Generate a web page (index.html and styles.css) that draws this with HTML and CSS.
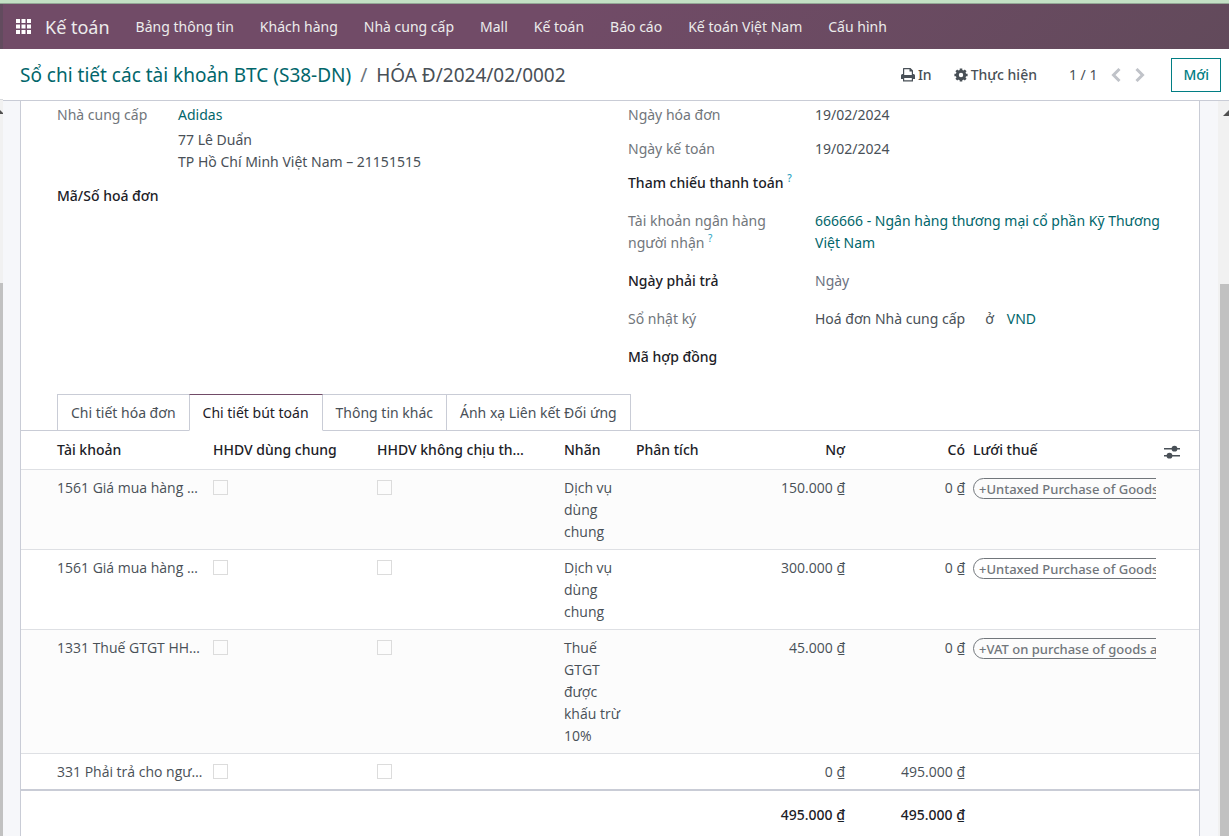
FILE: index.html
```
<!DOCTYPE html>
<html lang="vi">
<head>
  <meta charset="UTF-8" />
  <meta name="viewport" content="width=device-width, initial-scale=1" />
  <title>HÓA Đ/2024/02/0002 | Kế toán</title>
  <link rel="stylesheet" href="styles.css">
</head>
<body>
  <div class="top-strip"></div>
  <div class="window">
    <div class="edge" aria-hidden="true">
      <div class="edge-nav"></div>
      <div class="edge-panel"></div>
      <div class="edge-track">
        <svg class="edge-arrow" width="3" height="4" viewBox="0 0 3 4"><path d="M0 0L3 3V4H0z" fill="#505050"/></svg>
        <div class="scroll-thumb"></div>
      </div>
    </div>

    <div class="app">
      <nav class="navbar">
        <button type="button" class="apps-btn" aria-label="Ứng dụng">
          <svg width="15" height="15" viewBox="0 0 15 15" fill="#fff">
            <path d="M0 0h4v4H0zM5.5 0h4v4h-4zM11 0h4v4h-4zM0 5.5h4v4H0zM5.5 5.5h4v4h-4zM11 5.5h4v4h-4zM0 11h4v4H0zM5.5 11h4v4h-4zM11 11h4v4h-4z"/>
          </svg>
        </button>
        <a href="#" class="brand">Kế toán</a>
        <a href="#" class="nav-link">Bảng thông tin</a>
        <a href="#" class="nav-link">Khách hàng</a>
        <a href="#" class="nav-link">Nhà cung cấp</a>
        <a href="#" class="nav-link">Mall</a>
        <a href="#" class="nav-link">Kế toán</a>
        <a href="#" class="nav-link">Báo cáo</a>
        <a href="#" class="nav-link">Kế toán Việt Nam</a>
        <a href="#" class="nav-link">Cấu hình</a>
      </nav>

      <header class="control-panel">
        <div class="breadcrumb">
          <a href="#">Sổ chi tiết các tài khoản BTC (S38-DN)</a>
          <span class="slash">/</span>
          <span>HÓA Đ/2024/02/0002</span>
        </div>
        <button type="button" class="action">
          <svg width="14" height="14" viewBox="0 0 14 14" fill="#495057">
            <path fill-rule="evenodd" d="M2.5 0h7L12 2.5V6h.5A1.5 1.5 0 0 1 14 7.500V11h-2v2.500H2V11H0V7.500A1.500 1.500 0 0 1 1.500 6H2V.5zM3.200 1.200V7h7.600V3.600H8.500V1.200zM3.200 10v2.300h7.600V10z"/>
          </svg>
          In
        </button>
        <button type="button" class="action">
          <svg width="14" height="14" viewBox="0 0 14 14">
            <circle cx="7" cy="7" r="3.700" fill="none" stroke="#495057" stroke-width="3"/>
            <path d="M7 .4v2.400M7 11.200v2.400M.4 7h2.400M11.200 7h2.400M2.300 2.300L4 4M10 10l1.700 1.700M2.300 11.700L4 10M10 4l1.700-1.700" stroke="#495057" stroke-width="2.600"/>
          </svg>
          Thực hiện
        </button>
        <div class="pager">
          <span class="pager-value">1 / 1</span>
          <button type="button" aria-label="Trước">
            <svg width="10" height="14" viewBox="0 0 10 14"><path d="M8.500 1L2.500 7l6 6" fill="none" stroke="#c0c3c9" stroke-width="3"/></svg>
          </button>
          <button type="button" aria-label="Tiếp">
            <svg width="10" height="14" viewBox="0 0 10 14"><path d="M1.500 1l6 6-6 6" fill="none" stroke="#c0c3c9" stroke-width="3"/></svg>
          </button>
        </div>
        <button type="button" class="new-btn">Mới</button>
      </header>

      <div class="content">
        <main class="sheet">
          <div class="form">
            <dl class="group group-left">
              <div class="field compact">
                <dt>Nhà cung cấp</dt>
                <dd>
                  <a href="#" class="partner">Adidas</a>
                  77 Lê Duẩn<br>
                  TP Hồ Chí Minh Việt Nam – 21151515
                </dd>
              </div>
              <div class="field">
                <dt class="empty">Mã/Số hoá đơn</dt>
                <dd></dd>
              </div>
            </dl>
            <dl class="group group-right">
              <div class="field compact">
                <dt>Ngày hóa đơn</dt>
                <dd>19/02/2024</dd>
              </div>
              <div class="field compact">
                <dt>Ngày kế toán</dt>
                <dd>19/02/2024</dd>
              </div>
              <div class="field">
                <dt class="empty">Tham chiếu thanh toán <sup>?</sup></dt>
                <dd></dd>
              </div>
              <div class="field">
                <dt>Tài khoản ngân hàng người nhận <sup>?</sup></dt>
                <dd><a href="#">666666 - Ngân hàng thương mại cổ phần Kỹ Thương Việt Nam</a></dd>
              </div>
              <div class="field">
                <dt class="empty">Ngày phải trả</dt>
                <dd class="muted">Ngày</dd>
              </div>
              <div class="field">
                <dt>Sổ nhật ký</dt>
                <dd class="journal">
                  <span>Hoá đơn Nhà cung cấp</span>
                  <span class="in">ở</span>
                  <a href="#">VND</a>
                </dd>
              </div>
              <div class="field">
                <dt class="empty">Mã hợp đồng</dt>
                <dd></dd>
              </div>
            </dl>
          </div>

          <div class="tabs" role="tablist">
            <button type="button" role="tab" class="tab">Chi tiết hóa đơn</button>
            <button type="button" role="tab" class="tab active" aria-selected="true">Chi tiết bút toán</button>
            <button type="button" role="tab" class="tab">Thông tin khác</button>
            <button type="button" role="tab" class="tab">Ánh xạ Liên kết Đối ứng</button>
          </div>

          <table class="lines">
            <colgroup>
              <col class="col-account">
              <col class="col-shared">
              <col class="col-exempt">
              <col class="col-label">
              <col class="col-analytic">
              <col class="col-money">
              <col class="col-money">
              <col>
              <col class="col-options">
            </colgroup>
            <thead>
              <tr>
                <th>Tài khoản</th>
                <th>HHDV dùng chung</th>
                <th class="cut-head"><div class="cut">HHDV không chịu thuế GTGT</div></th>
                <th>Nhãn</th>
                <th>Phân tích</th>
                <th class="num">Nợ</th>
                <th class="num">Có</th>
                <th>Lưới thuế</th>
                <th class="options">
                  <button type="button" aria-label="Tùy chọn cột">
                    <svg width="16" height="14" viewBox="0 0 16 14" fill="#495057">
                      <path d="M0 3h16v1.500H0zM0 10h16v1.500H0z"/>
                      <circle cx="10.500" cy="3.700" r="2.900"/>
                      <circle cx="5.500" cy="10.700" r="2.900"/>
                    </svg>
                  </button>
                </th>
              </tr>
            </thead>
            <tbody>
              <tr>
                <td><div class="cut">1561 Giá mua hàng hóa</div></td>
                <td><input type="checkbox" aria-label="HHDV dùng chung"></td>
                <td><input type="checkbox" aria-label="HHDV không chịu thuế"></td>
                <td>Dịch vụ dùng chung</td>
                <td></td>
                <td class="num">150.000 ₫</td>
                <td class="num">0 ₫</td>
                <td><div class="tags"><span class="tag">+Untaxed Purchase of Goods and Services</span></div></td>
                <td></td>
              </tr>
              <tr>
                <td><div class="cut">1561 Giá mua hàng hóa</div></td>
                <td><input type="checkbox" aria-label="HHDV dùng chung"></td>
                <td><input type="checkbox" aria-label="HHDV không chịu thuế"></td>
                <td>Dịch vụ dùng chung</td>
                <td></td>
                <td class="num">300.000 ₫</td>
                <td class="num">0 ₫</td>
                <td><div class="tags"><span class="tag">+Untaxed Purchase of Goods and Services</span></div></td>
                <td></td>
              </tr>
              <tr>
                <td><div class="cut">1331 Thuế GTGT HHDV được khấu trừ</div></td>
                <td><input type="checkbox" aria-label="HHDV dùng chung"></td>
                <td><input type="checkbox" aria-label="HHDV không chịu thuế"></td>
                <td>Thuế GTGT được khấu trừ 10%</td>
                <td></td>
                <td class="num">45.000 ₫</td>
                <td class="num">0 ₫</td>
                <td><div class="tags"><span class="tag">+VAT on purchase of goods and services</span></div></td>
                <td></td>
              </tr>
              <tr>
                <td><div class="cut">331 Phải trả cho người bán</div></td>
                <td><input type="checkbox" aria-label="HHDV dùng chung"></td>
                <td><input type="checkbox" aria-label="HHDV không chịu thuế"></td>
                <td></td>
                <td></td>
                <td class="num">0 ₫</td>
                <td class="num">495.000 ₫</td>
                <td></td>
                <td></td>
              </tr>
            </tbody>
            <tfoot>
              <tr>
                <td colspan="5"></td>
                <td class="num">495.000 ₫</td>
                <td class="num">495.000 ₫</td>
                <td colspan="2"></td>
              </tr>
            </tfoot>
          </table>
        </main>
        <div class="scrollbar" aria-hidden="true">
          <svg class="scroll-arrow" width="6" height="6" viewBox="0 0 6 6"><path d="M0 6L6 0V6z" fill="#505050"/></svg>
          <div class="scroll-thumb"></div>
        </div>
      </div>
    </div>
  </div>
</body>
</html>
```
FILE: styles.css
```
* {
  box-sizing: border-box;
}

body {
  margin: 0;
  height: 100vh;
  display: flex;
  flex-direction: column;
  overflow: hidden;
  font-family: "Noto Sans", "Open Sans", sans-serif;
  font-size: 14px;
  line-height: 22px;
  color: #495057;
  background: #fff;
}

a {
  color: #01666b;
  text-decoration: none;
}

button {
  font: inherit;
  color: inherit;
  background: none;
  border: none;
  padding: 0;
  cursor: pointer;
}

svg {
  display: block;
}

.top-strip {
  flex: none;
  height: 4px;
  background: #c3e0c4;
  border-bottom: 1px solid #93a896;
}

.window {
  flex: 1;
  display: flex;
  min-height: 0;
}

/* Left window edge */
.edge {
  width: 3px;
  display: flex;
  flex-direction: column;
}
.edge-nav {
  height: 45px;
  background: #624b5e;
}
.edge-panel {
  height: 51px;
  border-bottom: 1px solid #d8dadd;
}
.edge-track {
  flex: 1;
  display: flex;
  flex-direction: column;
  padding-top: 10px;
  background: #f1f1f1;
}
.edge-arrow {
  flex: none;
}
.scroll-thumb {
  flex: 1;
  margin-top: 169px;
  background: #c1c1c1;
}

.app {
  flex: 1;
  min-width: 0;
  display: flex;
  flex-direction: column;
}

/* Navbar */
.navbar {
  flex: none;
  height: 45px;
  display: flex;
  align-items: center;
  background: linear-gradient(135deg, #714b67 45%, #624a5b);
}
.navbar a {
  color: #ececec;
}
.apps-btn {
  margin-left: 13px;
}
.brand {
  margin: 0 13px 0 14px;
  font-size: 18px;
}
.nav-link {
  padding: 0 13px;
}

/* Control panel */
.control-panel {
  flex: none;
  height: 52px;
  display: flex;
  align-items: center;
  padding: 0 8px 0 17px;
  border-bottom: 1px solid #c9ccd6;
}
.breadcrumb {
  flex: 1;
  font-size: 19px;
}
.slash {
  margin: 0 4px;
  color: #6c757d;
}
.action {
  display: flex;
  align-items: center;
  gap: 3px;
  margin-right: 22px;
  font-weight: 500;
}
.pager {
  display: flex;
  align-items: center;
  gap: 14px;
  margin: 0 26px 0 10px;
}
.new-btn {
  height: 34px;
  padding: 0 11px;
  border: 1px solid #017e84;
  color: #017e84;
  font-weight: 500;
}

/* Sheet */
.content {
  flex: 1;
  min-height: 0;
  display: flex;
  background: #f6f7fa;
}
.sheet {
  flex: 1;
  min-width: 0;
  margin: 0 18px 0 17px;
  border: 1px solid #c9ccd6;
  border-width: 0 1px;
  background: #fff;
}
.scrollbar {
  width: 11px;
  display: flex;
  flex-direction: column;
  align-items: flex-end;
  padding: 9px 0 0 2px;
  background: #f1f1f1;
}
.scroll-arrow {
  flex: none;
}
.scrollbar .scroll-thumb {
  width: 100%;
  margin-top: 168px;
}

.form {
  display: grid;
  grid-template-columns: 1fr 1fr;
  gap: 36px;
  padding: 3px 36px 10px;
}
.group {
  margin: 0;
}
.field {
  display: grid;
  grid-template-columns: 169px 1fr;
  column-gap: 18px;
  margin-bottom: 16px;
}
.group-left .field {
  grid-template-columns: 103px 1fr;
}
.field.compact {
  margin-bottom: 12px;
}
.field dt {
  min-height: 22px;
  color: #71767b;
}
.field dt.empty {
  color: #1c2127;
  font-weight: 500;
}
.field dd {
  margin: 0;
}
.field dd.muted {
  color: #6b7280;
}
.field sup {
  font-size: 10px;
  line-height: 0;
  color: #2a9fc0;
}
.partner {
  display: block;
  margin-bottom: 3px;
}
.journal {
  display: flex;
}
.in {
  margin: 0 13px 0 20px;
}

/* Tabs */
.tabs {
  display: flex;
  padding-left: 36px;
  border-bottom: 1px solid #c9ccd6;
}
.tab {
  height: 37px;
  margin-bottom: -1px;
  padding: 0 13px;
  border: 1px solid #c9ccd6;
}
.tab + .tab {
  margin-left: -1px;
}
.tab.active {
  z-index: 1;
  border-top-color: #714b67;
  border-bottom-color: #fff;
  color: #1c2127;
  background: #fff;
}

/* Journal items */
.lines {
  width: 100%;
  table-layout: fixed;
  border-collapse: separate;
  border-spacing: 0;
}
.col-account { width: 188px; }
.col-shared { width: 164px; }
.col-exempt { width: 187px; }
.col-label { width: 72px; }
.col-analytic { width: 97px; }
.col-money { width: 120px; }
.col-options { width: 39px; }

.lines th,
.lines td {
  padding: 7px 4px 6px;
  text-align: left;
  vertical-align: top;
  border-bottom: 1px solid #dee0e4;
}
.lines th {
  padding: 8px 4px;
  font-weight: 500;
  color: #1c2127;
}
.lines tbody td {
  font-family: "Open Sans", "Noto Sans", sans-serif;
}
.lines th:first-child,
.lines td:first-child {
  padding-left: 36px;
}
.lines .num {
  text-align: right;
  white-space: nowrap;
}
.lines th.cut-head {
  padding-right: 30px;
}
.lines th.options {
  padding: 12px 4px 0;
}
.cut {
  overflow: hidden;
  white-space: nowrap;
  text-overflow: ellipsis;
}
.lines tbody tr:nth-child(odd) {
  background: #fcfcfc;
}
.lines tbody tr:last-child td {
  border-bottom: 2px solid #c9ccd6;
}
.lines input {
  appearance: none;
  display: block;
  width: 15px;
  height: 15px;
  margin: 3px 0 0;
  border: 1px solid #dcdcdc;
}
.lines tfoot td {
  padding-top: 13px;
  border-bottom: none;
  font-weight: 500;
  color: #1c2127;
}
.tags {
  display: flex;
  overflow: hidden;
  padding-top: 1px;
}
.tag {
  flex: none;
  height: 21px;
  padding: 0 5px;
  border: 1px solid #71767b;
  border-radius: 11px;
  font-family: "Noto Sans", "Open Sans", sans-serif;
  font-size: 13px;
  line-height: 20px;
  font-weight: 500;
  color: #71767b;
  white-space: nowrap;
}
```
